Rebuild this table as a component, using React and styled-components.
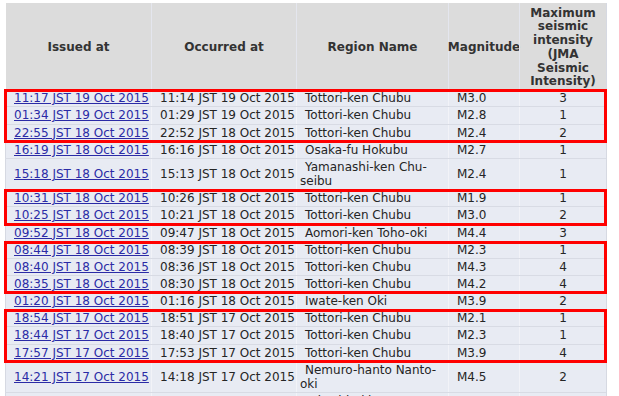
import React from "react";
import styled, { createGlobalStyle } from "styled-components";

const GlobalStyle = createGlobalStyle`
  body {
    margin: 0;
    background: #ffffff;
    font-family: "DejaVu Sans", Verdana, sans-serif;
  }
`;

const COLUMNS = "146px 145px 152px 71px 87px";

const Table = styled.div`
  width: 601px;
  margin: 3px 0 0 5px;
  font-size: 12px;
  line-height: 14.15px;
  color: #252525;
  border-right: 1px solid #d6d9e2;
`;

const HeadRow = styled.div`
  display: grid;
  grid-template-columns: ${COLUMNS};
  background: #dcdcdc;
  border-bottom: 1px solid #d6d9e2;
`;

const HeadCell = styled.div`
  display: flex;
  align-items: center;
  justify-content: center;
  text-align: center;
  font-weight: bold;
  line-height: 13.8px;
  color: #333333;
  padding: 3.5px 2px 0;
  min-height: 82.8px;
  border-left: 1px solid ${({ $first }) => ($first ? "#ffffff" : "#e4e6ee")};
`;

const Group = styled.div`
  outline: ${({ $marked }) => ($marked ? "3px solid #ff0000" : "none")};
  outline-offset: -2px;
  position: relative;
  z-index: ${({ $marked }) => ($marked ? 1 : 0)};
`;

const Row = styled.div`
  display: grid;
  grid-template-columns: ${COLUMNS};
  background: #e8ebf3;
  border-bottom: 1px solid #d8dbe4;
`;

const Cell = styled.div`
  display: flex;
  align-items: center;
  padding: 1px 2px 1px ${({ $pad }) => $pad ?? 8}px;
  justify-content: ${({ $center }) => ($center ? "center" : "flex-start")};
  border-left: 1px solid ${({ $first }) => ($first ? "#d6d9e2" : "#f2f3f8")};
  white-space: ${({ $wrap }) => ($wrap ? "normal" : "nowrap")};
`;

const RegionText = styled.span`
  text-indent: 5px;
  display: block;
`;

const Link = styled.a`
  color: #2b2ba6;
  text-decoration: underline;
`;

const rows = [
  ["11:17 JST 19 Oct 2015", "11:14 JST 19 Oct 2015", "Tottori-ken Chubu", "M3.0", "3"],
  ["01:34 JST 19 Oct 2015", "01:29 JST 19 Oct 2015", "Tottori-ken Chubu", "M2.8", "1"],
  ["22:55 JST 18 Oct 2015", "22:52 JST 18 Oct 2015", "Tottori-ken Chubu", "M2.4", "2"],
  ["16:19 JST 18 Oct 2015", "16:16 JST 18 Oct 2015", "Osaka-fu Hokubu", "M2.7", "1"],
  ["15:18 JST 18 Oct 2015", "15:13 JST 18 Oct 2015", "Yamanashi-ken Chu-seibu", "M2.4", "1"],
  ["10:31 JST 18 Oct 2015", "10:26 JST 18 Oct 2015", "Tottori-ken Chubu", "M1.9", "1"],
  ["10:25 JST 18 Oct 2015", "10:21 JST 18 Oct 2015", "Tottori-ken Chubu", "M3.0", "2"],
  ["09:52 JST 18 Oct 2015", "09:47 JST 18 Oct 2015", "Aomori-ken Toho-oki", "M4.4", "3"],
  ["08:44 JST 18 Oct 2015", "08:39 JST 18 Oct 2015", "Tottori-ken Chubu", "M2.3", "1"],
  ["08:40 JST 18 Oct 2015", "08:36 JST 18 Oct 2015", "Tottori-ken Chubu", "M4.3", "4"],
  ["08:35 JST 18 Oct 2015", "08:30 JST 18 Oct 2015", "Tottori-ken Chubu", "M4.2", "4"],
  ["01:20 JST 18 Oct 2015", "01:16 JST 18 Oct 2015", "Iwate-ken Oki", "M3.9", "2"],
  ["18:54 JST 17 Oct 2015", "18:51 JST 17 Oct 2015", "Tottori-ken Chubu", "M2.1", "1"],
  ["18:44 JST 17 Oct 2015", "18:40 JST 17 Oct 2015", "Tottori-ken Chubu", "M2.3", "1"],
  ["17:57 JST 17 Oct 2015", "17:53 JST 17 Oct 2015", "Tottori-ken Chubu", "M3.9", "4"],
  ["14:21 JST 17 Oct 2015", "14:18 JST 17 Oct 2015", "Nemuro-hanto Nanto-oki", "M4.5", "2"],
  ["09:25 JST 17 Oct 2015", "09:21 JST 17 Oct 2015", "Tokachi-oki", "M3.4", "2"],
];

// consecutive row ranges, marked ones get the red box
const groups = [
  [0, 3, true],
  [3, 5, false],
  [5, 7, true],
  [7, 8, false],
  [8, 11, true],
  [11, 12, false],
  [12, 15, true],
  [15, 17, false],
];

const DataRow = ({ row }) => (
  <Row>
    <Cell $first>
      <Link href="#">{row[0]}</Link>
    </Cell>
    <Cell>{row[1]}</Cell>
    <Cell $pad={3} $wrap>
      <RegionText>{row[2]}</RegionText>
    </Cell>
    <Cell>{row[3]}</Cell>
    <Cell $center $pad={2}>
      {row[4]}
    </Cell>
  </Row>
);

const App = () => (
  <>
    <GlobalStyle />
    <Table>
      <HeadRow>
        <HeadCell $first>Issued at</HeadCell>
        <HeadCell>Occurred at</HeadCell>
        <HeadCell>Region Name</HeadCell>
        <HeadCell>Magnitude</HeadCell>
        <HeadCell>
          Maximum seismic intensity (JMA Seismic Intensity)
        </HeadCell>
      </HeadRow>
      {groups.map(([from, to, marked]) => (
        <Group key={from} $marked={marked}>
          {rows.slice(from, to).map((row) => (
            <DataRow key={row[0]} row={row} />
          ))}
        </Group>
      ))}
    </Table>
  </>
);

export default App;
